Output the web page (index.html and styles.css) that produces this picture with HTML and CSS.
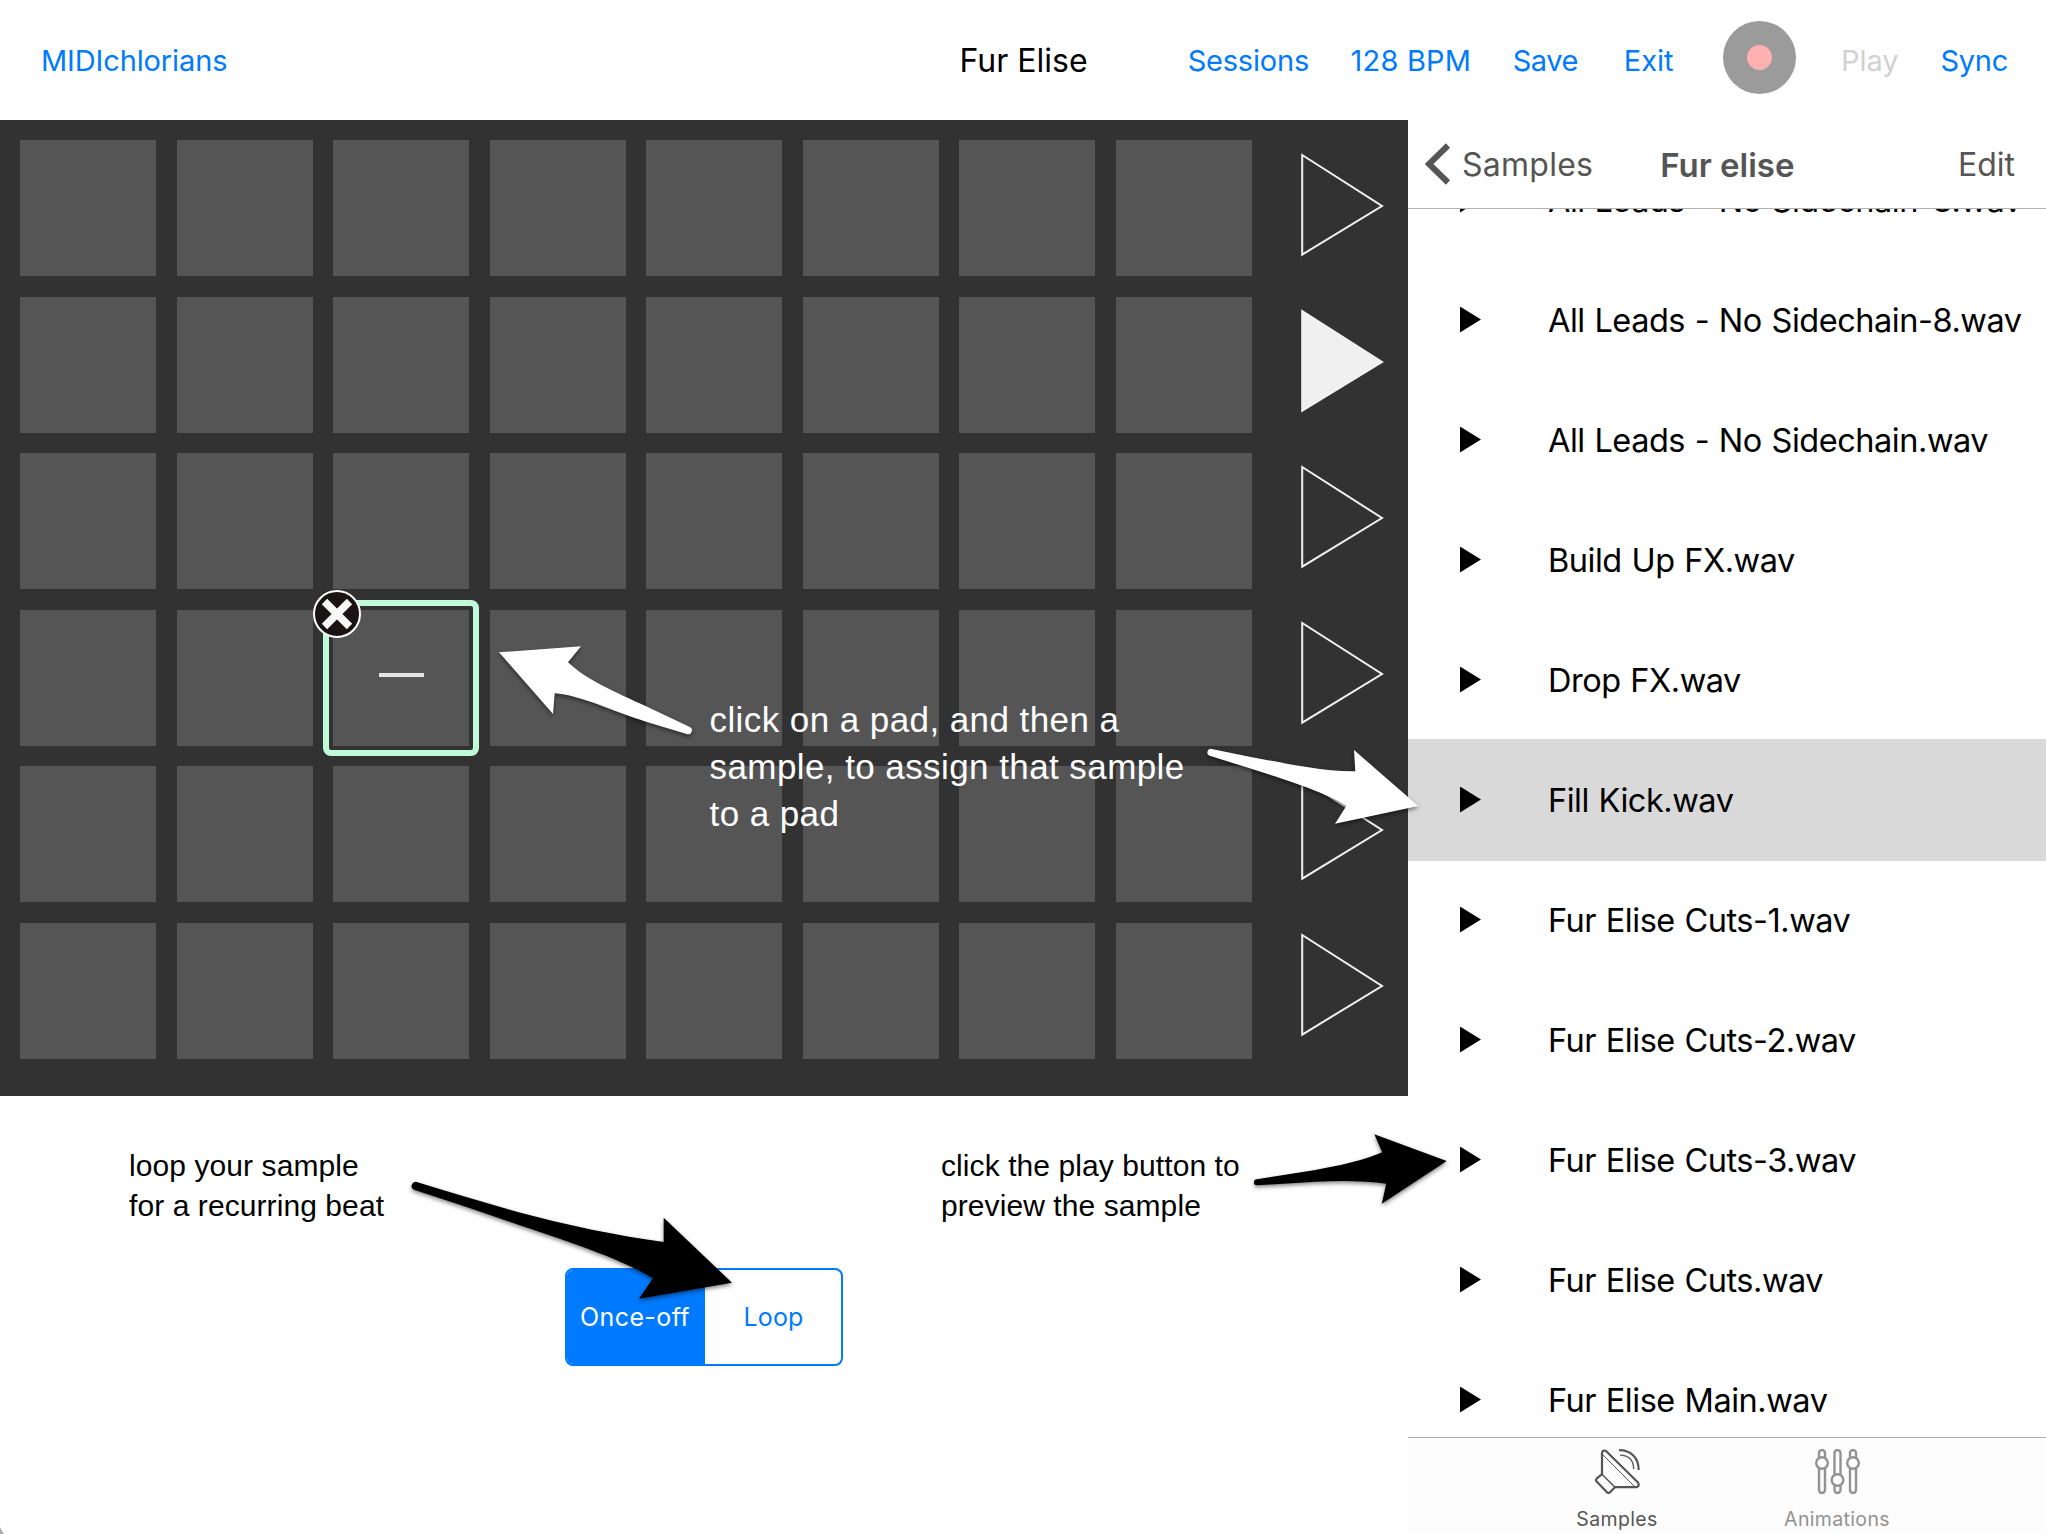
FILE: index.html
```html
<!DOCTYPE html>
<html lang="en">
<head>
<meta charset="utf-8">
<title>MIDIchlorians</title>
<link rel="stylesheet" href="styles.css">
</head>
<body>
<div class="app">
  <header class="toolbar">
    <a class="brand">MIDIchlorians</a>
    <h1 class="session-title">Fur Elise</h1>
    <nav class="actions">
      <a class="a-sessions">Sessions</a>
      <a class="a-bpm">128 BPM</a>
      <a class="a-save">Save</a>
      <a class="a-exit">Exit</a>
      <span class="record"><span class="record-dot"></span></span>
      <a class="a-play disabled">Play</a>
      <a class="a-sync">Sync</a>
    </nav>
  </header>
  <main class="workspace">
    <section class="stage">
      <div class="board">
        <div class="pads">
          <i class="pad"></i><i class="pad"></i><i class="pad"></i><i class="pad"></i><i class="pad"></i><i class="pad"></i><i class="pad"></i><i class="pad"></i>
          <i class="pad"></i><i class="pad"></i><i class="pad"></i><i class="pad"></i><i class="pad"></i><i class="pad"></i><i class="pad"></i><i class="pad"></i>
          <i class="pad"></i><i class="pad"></i><i class="pad"></i><i class="pad"></i><i class="pad"></i><i class="pad"></i><i class="pad"></i><i class="pad"></i>
          <i class="pad"></i><i class="pad"></i><div class="pad selected"><span class="dash"></span><span class="ring"></span>
            <svg class="close" viewBox="0 0 48 48"><circle cx="24" cy="24" r="23" fill="#1a1314" stroke="#fff" stroke-width="2"/><path d="M11.5 11.5 36.5 36.5M36.5 11.5 11.5 36.5" stroke="#f7f7f7" stroke-width="7.6"/></svg></div><i class="pad"></i><i class="pad"></i><i class="pad"></i><i class="pad"></i><i class="pad"></i>
          <i class="pad"></i><i class="pad"></i><i class="pad"></i><i class="pad"></i><i class="pad"></i><i class="pad"></i><i class="pad"></i><i class="pad"></i>
          <i class="pad"></i><i class="pad"></i><i class="pad"></i><i class="pad"></i><i class="pad"></i><i class="pad"></i><i class="pad"></i><i class="pad"></i>
        </div>
        <div class="launchers">
          <svg class="launch" viewBox="0 0 84 106"><path d="M2.2 3 82 54 2.2 102.6Z"/></svg>
          <svg class="launch on" viewBox="0 0 84 106"><path d="M2.2 3 82 54 2.2 102.6Z"/></svg>
          <svg class="launch" viewBox="0 0 84 106"><path d="M2.2 3 82 54 2.2 102.6Z"/></svg>
          <svg class="launch" viewBox="0 0 84 106"><path d="M2.2 3 82 54 2.2 102.6Z"/></svg>
          <svg class="launch" viewBox="0 0 84 106"><path d="M2.2 3 82 54 2.2 102.6Z"/></svg>
          <svg class="launch" viewBox="0 0 84 106"><path d="M2.2 3 82 54 2.2 102.6Z"/></svg>
        </div>
      </div>
      <div class="mode">
        <div class="segmented">
          <button class="segment active">Once-off</button>
          <button class="segment">Loop</button>
        </div>
      </div>
    </section>
    <aside class="browser">
      <div class="browser-head">
        <svg class="chevron" viewBox="0 0 26 42"><path d="M23 2.5 4 21 23 39.5"/></svg>
        <a class="back">Samples</a>
        <h2 class="folder">Fur elise</h2>
        <a class="edit">Edit</a>
      </div>
      <ul class="files">
        <li class="file"><span class="play"></span><span class="name">All Leads - No Sidechain-8.wav</span></li>
        <li class="file"><span class="play"></span><span class="name">All Leads - No Sidechain-8.wav</span></li>
        <li class="file"><span class="play"></span><span class="name">All Leads - No Sidechain.wav</span></li>
        <li class="file"><span class="play"></span><span class="name">Build Up FX.wav</span></li>
        <li class="file"><span class="play"></span><span class="name">Drop FX.wav</span></li>
        <li class="file current"><span class="play"></span><span class="name">Fill Kick.wav</span></li>
        <li class="file"><span class="play"></span><span class="name">Fur Elise Cuts-1.wav</span></li>
        <li class="file"><span class="play"></span><span class="name">Fur Elise Cuts-2.wav</span></li>
        <li class="file"><span class="play"></span><span class="name">Fur Elise Cuts-3.wav</span></li>
        <li class="file"><span class="play"></span><span class="name">Fur Elise Cuts.wav</span></li>
        <li class="file"><span class="play"></span><span class="name">Fur Elise Main.wav</span></li>
      </ul>
      <nav class="tabs">
        <a class="tab tab-on">
          <svg class="tab-icon" viewBox="0 0 45 45" fill="none" stroke="currentColor" stroke-linecap="round" stroke-linejoin="round">
            <path stroke-width="2.200" d="M7 25.2V4Q7.6 .6 11 2L43 33.5Q45 37 41.5 38.2H20L15 43.3Q13.5 44.5 12 43.3L1.6 32.6Q.5 31 1.600 29.600Z"/>
            <path stroke-width="1.500" d="M7 25.2 20 38.2"/><path stroke-width="1" d="M8 6 39.5 37.5"/>
            <path stroke-width="2.200" stroke-linecap="butt" d="M24 1.200C36 1.200 43.700 9 43.700 21"/><path stroke-width="1.300" stroke-linecap="butt" d="M25 6.200C33.500 6.500 38.500 11.500 38.700 20"/>
          </svg>
          <span class="tab-label">Samples</span>
        </a>
        <a class="tab">
          <svg class="tab-icon" viewBox="0 0 45 45" fill="none" stroke="currentColor" stroke-width="2.400">
            <path d="M4 8.500V4a3 3 0 0 1 6 0V8.500M4 19.500V41a3 3 0 0 0 6 0V19.500M35 8.500V4a3 3 0 0 1 6 0V8.500M35 19.500V41a3 3 0 0 0 6 0V19.500M19.500 25.500V4a3 3 0 0 1 6 0V25.500M19.500 36.500V41a3 3 0 0 0 6 0V36.500"/>
            <circle cx="7" cy="14" r="5.800"/><circle cx="22.500" cy="31" r="5.800"/><circle cx="38" cy="14" r="5.800"/>
          </svg>
          <span class="tab-label">Animations</span>
        </a>
      </nav>
    </aside>
  </main>
  <svg class="arrows" viewBox="0 0 2046 1534">
    <g fill="#fff">
      <path d="M499 652.300 581 646.300 568 662.300C585 679 615 692 646 706.300L689.300 726.700A3.800 3.800 0 0 1 686.700 734L646 721.700C612 711 580 695 554.700 693.300L553 714Z"/>
      <path d="M1418.300 806 1354 750 1355.300 771.300C1325 772 1285 763 1252 757.300L1211.700 749A3.500 3.500 0 0 0 1209.700 755.700L1252 769C1286 780 1325 792 1346.300 806L1335 823.700Z"/>
    </g>
    <g fill="#000">
      <path d="M732 1282.700 663.700 1217.700V1242C620 1236 565 1225 516.800 1211.700Q465 1197 417.500 1182.300A3.900 3.900 0 0 0 414 1189.700Q465 1206 516.800 1224.300C560 1239 620 1258 653 1278.300L639 1298.700Z"/>
      <path d="M1446.700 1161 1374.300 1134.300 1382.200 1152.300C1365 1160 1338 1166 1315.400 1170L1256.900 1179.300A3 3 0 0 0 1256.900 1185.300L1315.400 1181.700C1340 1180.500 1365 1180.500 1386.200 1183.700L1381.800 1203.700Z"/>
    </g>
  </svg>
  <p class="note note-assign">click on a pad, and then a<br>sample, to assign that sample<br>to a pad</p>
  <p class="note note-loop">loop your sample<br>for a recurring beat</p>
  <p class="note note-preview">click the play button to<br>preview the sample</p>
</div>
</body>
</html>
```
FILE: styles.css
```css
* { box-sizing: border-box; }
html, body { margin: 0; }
body { background: #fff; font-family: Inter, "Liberation Sans", sans-serif; color: #000; }
h1, h2, p, ul { margin: 0; padding: 0; font-weight: 400; }
svg { display: block; }

.app { position: relative; width: 2046px; height: 1534px; overflow: hidden; display: flex; flex-direction: column; }
/* rounded window corner */
.app::after { content: ""; position: absolute; left: 0; bottom: 0; width: 4px; height: 7px; background: #a8a8a8; clip-path: polygon(0 0, 35% 45%, 100% 100%, 0 100%); }

.toolbar { height: 120px; display: grid; grid-template-columns: 1fr auto 1fr; align-items: center; padding: 2px 38px 0 41px; font-size: 29px; line-height: 36px; color: #007aff; }
.brand { letter-spacing: -.12px; }
.session-title { font-size: 32px; line-height: 40px; color: #000; margin-left: -2px; }
.actions { display: flex; justify-content: flex-end; align-items: center; }
.a-sessions { letter-spacing: -.2px; }
.a-bpm { letter-spacing: .2px; margin-left: 41.5px; }
.a-save { letter-spacing: -.5px; margin-left: 41.5px; }
.a-exit { margin-left: 46px; }
.a-play { letter-spacing: -.1px; margin-left: 45px; }
.a-sync { letter-spacing: -.25px; margin-left: 42px; }
.disabled { color: #d1d1d1; }
.record { width: 73px; height: 73px; border-radius: 50%; background: #9b9b9b; display: grid; place-items: center; margin: -7px 0 0 49.500px; }
.record-dot { width: 25px; height: 25px; border-radius: 50%; background: #ffb0b0; }

.workspace { flex: 1; display: flex; min-height: 0; }
.stage { width: 1408px; display: flex; flex-direction: column; }
.board { height: 976px; background: #323232; padding: 20px 24px 0 20px; display: flex; justify-content: space-between; }
.pads { display: grid; grid-template-columns: repeat(8, 136px); grid-auto-rows: 136px; gap: 20.5px; align-content: start; }
.pad { background: #555; }
.selected { position: relative; display: grid; place-items: center; }
.dash { width: 45px; height: 4px; background: #e3e3e3; margin-top: -6px; }
.ring { position: absolute; inset: -10px; border: 6px solid #c0fbd9; border-radius: 8px; box-shadow: inset 0 0 0 4px #323232; }
.close { position: absolute; left: -20px; top: -20px; width: 48px; height: 48px; }
.launchers { display: flex; flex-direction: column; gap: 50px; padding-top: 12px; }
.launch { width: 84px; height: 106px; fill: none; stroke: #f2f2f2; stroke-width: 2; }
.on { fill: #f0f0f0; }

.mode { padding-top: 172px; display: flex; justify-content: center; }
.segmented { width: 278px; height: 98px; border: 2px solid #007aff; border-radius: 8px; display: flex; overflow: hidden; }
.segment { flex: 1; border: 0; padding: 0 0 0 1px; background: none; color: #007aff; font: 25px/32px Inter, "Liberation Sans", sans-serif; letter-spacing: .2px; }
.active { background: #007aff; color: #fff; flex: 0 0 138px; padding: 0 2px 0 0; letter-spacing: .4px; }

.browser { flex: 1; display: flex; flex-direction: column; min-width: 0; }
.browser-head { height: 89px; border-bottom: 1px solid #b2b2b2; display: flex; align-items: center; color: #555; font-size: 32px; line-height: 40px; padding: 0 31px 0 17px; }
.chevron { width: 26px; height: 42px; fill: none; stroke: #555; stroke-width: 6; }
.back { margin-left: 11px; padding-top: 1px; letter-spacing: .25px; }
.folder { font-size: 33px; font-weight: 600; margin-left: 67px; padding-top: 1px; }
.edit { margin-left: auto; padding-top: 1px; }
.files { flex: 1; list-style: none; overflow: hidden; display: flex; flex-direction: column; }
.file { flex: 0 0 120px; display: flex; align-items: center; padding-left: 52px; font-size: 32.5px; line-height: 40px; letter-spacing: -.47px; word-spacing: 1px; white-space: nowrap; }
.file:first-child { margin-top: -69px; }
.name { padding-top: 2px; }
.current { background: #d9d9d9; flex-basis: 122px; margin: -1px 0; }
.play { width: 21px; height: 26px; background: #000; clip-path: polygon(0 0, 100% 50%, 0 100%); margin: -1px 67px 0 0; }
.tabs { height: 97px; border-top: 1px solid #b2b2b2; background: #fdfdfd; display: flex; justify-content: center; gap: 20px; }
.tab { width: 200px; display: flex; flex-direction: column; align-items: center; padding-top: 11px; color: #929292; }
.tab-on { color: #555; }
.tab-icon { width: 45px; height: 45px; }
.tab-label { font-size: 19.5px; line-height: 24px; margin-top: 13px; letter-spacing: .35px; }

.arrows { position: absolute; left: 0; top: 0; width: 2046px; height: 1534px; filter: drop-shadow(0 2px 2px rgba(0, 0, 0, .5)); }
.note { position: absolute; font-family: "Liberation Sans", Arial, sans-serif; font-size: 30px; line-height: 40px; letter-spacing: .08px; white-space: nowrap; }
.note-assign { left: 709.5px; top: 696px; font-size: 35px; line-height: 47px; letter-spacing: .42px; color: #fff; }
.note-loop { left: 129px; top: 1146px; }
.note-preview { left: 941px; top: 1146px; }
```
